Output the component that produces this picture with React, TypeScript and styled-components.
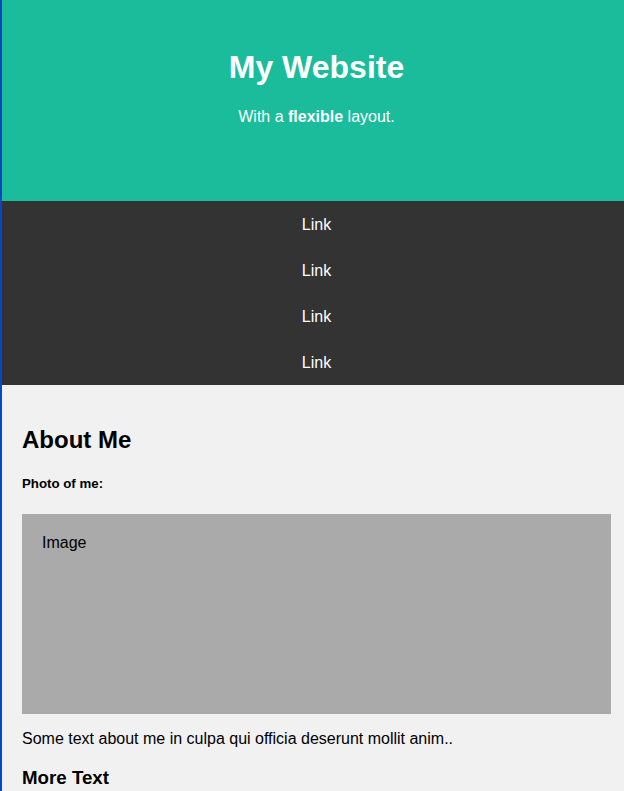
import * as React from 'react';
import styled, { createGlobalStyle } from 'styled-components';

const GlobalStyle = createGlobalStyle`
  html, body {
    margin: 0;
    padding: 0;
    overflow: hidden;
  }
  body {
    font-family: "Liberation Sans", Arial, sans-serif;
    background: #f1f1f1;
  }
`;

const Page = styled.div`
  width: 629px;
  min-height: 791px;
  border-left: 2px solid #0a47c2;
  background: #f1f1f1;
`;

const Header = styled.header`
  box-sizing: border-box;
  height: 201px;
  padding-top: 28px;
  background: #1abc9c;
  color: #ffffff;
  text-align: center;

  h1 {
    margin: 21px 0 0;
    font-size: 32px;
    line-height: 37px;
    font-weight: bold;
  }

  p {
    margin: 22px 0 0;
    font-size: 16px;
  }
`;

const NavBar = styled.nav`
  display: flex;
  flex-direction: column;
  background: #333333;
`;

const NavLink = styled.a`
  display: block;
  padding: 15px 20px 13px;
  color: #ffffff;
  font-size: 16px;
  line-height: 18px;
  text-align: center;
  text-decoration: none;
`;

const Main = styled.main`
  padding: 20px;
  background: #f1f1f1;
  color: #000000;

  h2 {
    margin: 21px 0 22px;
    font-size: 24px;
  }

  h5 {
    margin: 22px 0 0;
    font-size: 13.28px;
  }

  h3 {
    margin: 19.7px 0 18.7px;
    font-size: 18.72px;
  }
`;

const FakeImage = styled.div<{ height: number }>`
  box-sizing: border-box;
  height: ${(p) => p.height}px;
  margin-top: 22.5px;
  padding: 20px;
  background: #aaaaaa;
  font-size: 16px;
`;

const Text = styled.p`
  margin: 16px 0 0;
  font-size: 16px;
`;

const links = ['Link', 'Link', 'Link', 'Link'];

const App = (): JSX.Element => {
  return (
    <>
      <GlobalStyle />
      <Page>
        <Header>
          <h1>My Website</h1>
          <p>
            With a <b>flexible</b> layout.
          </p>
        </Header>
        <NavBar>
          {links.map((label, i) => (
            <NavLink key={i} href="#">
              {label}
            </NavLink>
          ))}
        </NavBar>
        <Main>
          <h2>About Me</h2>
          <h5>Photo of me:</h5>
          <FakeImage height={200}>Image</FakeImage>
          <Text>Some text about me in culpa qui officia deserunt mollit anim..</Text>
          <h3>More Text</h3>
        </Main>
      </Page>
    </>
  );
};

export default App;
